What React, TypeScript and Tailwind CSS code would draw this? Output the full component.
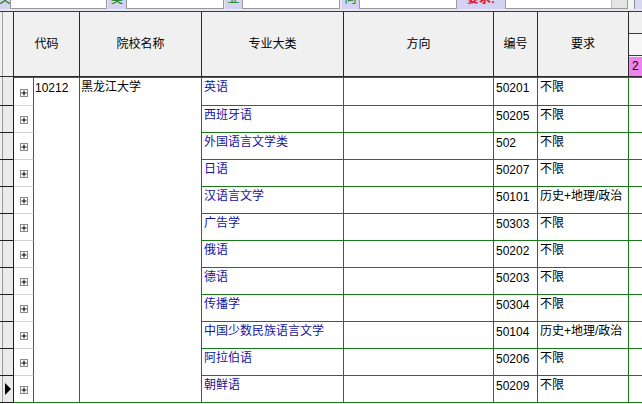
import React from "react";

const rows: [string, string, string][] = [
  ["英语", "50201", "不限"],
  ["西班牙语", "50205", "不限"],
  ["外国语言文学类", "502", "不限"],
  ["日语", "50207", "不限"],
  ["汉语言文学", "50101", "历史+地理/政治"],
  ["广告学", "50303", "不限"],
  ["俄语", "50202", "不限"],
  ["德语", "50203", "不限"],
  ["传播学", "50304", "不限"],
  ["中国少数民族语言文学", "50104", "历史+地理/政治"],
  ["阿拉伯语", "50206", "不限"],
  ["朝鲜语", "50209", "不限"],
];

function PlusBox() {
  return (
    <div className="w-[8px] h-[8px] border border-[#8a8a8a] bg-white flex items-center justify-center">
      <svg width="6" height="6" viewBox="0 0 6 6">
        <rect x="0.5" y="2.5" width="5" height="1" fill="#000" />
        <rect x="2.5" y="0.5" width="1" height="5" fill="#000" />
      </svg>
    </div>
  );
}

export default function App() {
  const font = { fontFamily: '"Liberation Sans", "Noto Sans CJK SC", sans-serif' };
  return (
    <div className="w-[642px] h-[404px] overflow-hidden bg-white text-[12px] text-black" style={font}>
      {/* top strip (clipped form) */}
      <div className="h-[11px] overflow-hidden flex items-end bg-[#e6e6f2]">
        <div className="flex items-end h-[24px] mb-[2px]">
          <div className="w-[12px] h-[20px] bg-[#d4d2f2] text-[#108010] leading-[20px] overflow-hidden -ml-[2px] pl-[1px]">文</div>
          <div className="w-[97px] h-[20px] bg-white border border-[#9a9a9a]" />
          <div className="w-[18px] h-[20px] bg-[#d4d2f2] text-[#108010] leading-[20px] text-center ml-[1px]">类</div>
          <div className="w-[98px] h-[20px] bg-white border border-[#9a9a9a]" />
          <div className="w-[17px] h-[20px] bg-[#d4d2f2] text-[#108010] leading-[20px] text-center ml-[1px]">业</div>
          <div className="w-[98px] h-[20px] bg-white border border-[#9a9a9a]" />
          <div className="w-[17px] h-[20px] bg-[#d4d2f2] text-[#108010] leading-[20px] text-center ml-[2px]">向</div>
          <div className="w-[98px] h-[20px] bg-white border border-[#9a9a9a]" />
          <div className="w-[48px] h-[20px] bg-[#d4d2f2] text-[#e01030] font-bold leading-[20px] text-center">要求:</div>
          <div className="w-[123px] h-[20px] bg-white border border-[#9a9a9a] flex justify-end">
            <div className="w-[16px] h-full bg-[#e4e4e4] border-l border-[#c0c0c0]" />
          </div>
          <div className="w-[6px] h-[20px] bg-[#f4f4f4]" />
          <div className="w-[1px] h-[20px] bg-[#8a8a9a]" />
          <div className="w-[7px] h-[20px] bg-[#d8d8f0]" />
        </div>
      </div>

      {/* table */}
      <div
        className="grid border-t border-[#3a3a3a] grid-cols-[14px_20px_46px_122px_142px_150px_44px_91px_13px] grid-rows-[65px_29px_repeat(11,27px)]"
      >
        {/* header */}
        <div className="bg-[#f0f0f0] border-b border-r border-[#2a2a2a] pl-[2px]">
          <div className="h-full border-l border-[#a0a0a0]" />
        </div>
        <div className="col-span-2 bg-[#f0f0f0] border-b border-r border-[#2a2a2a] flex items-center justify-center">代码</div>
        <div className="bg-[#f0f0f0] border-b border-r border-[#2a2a2a] flex items-center justify-center">院校名称</div>
        <div className="bg-[#f0f0f0] border-b border-r border-[#2a2a2a] flex items-center justify-center">专业大类</div>
        <div className="bg-[#f0f0f0] border-b border-r border-[#2a2a2a] flex items-center justify-center">方向</div>
        <div className="bg-[#f0f0f0] border-b border-r border-[#2a2a2a] flex items-center justify-center">编号</div>
        <div className="bg-[#f0f0f0] border-b border-r border-[#2a2a2a] flex items-center justify-center">要求</div>
        <div className="bg-[#f0f0f0] border-b border-[#2a2a2a] flex flex-col">
          <div className="h-[22px] border-b border-[#3a3a3a] bg-[#f0f0f0]" />
          <div className="h-[22px] border-b border-[#3a3a3a] bg-[#f6f6f6]" />
          <div className="flex-1 bg-[#ee82ee] mt-[1px] pl-[3px] leading-[18px]">2</div>
        </div>

        {/* data rows */}
        {rows.map((r, i) => {
          const first = i === 0;
          const last = i === rows.length - 1;
          const top = first ? "border-t border-t-[#1a7a1a]" : "";
          return (
            <React.Fragment key={i}>
              <div className="bg-[#f0f0f0] border-b border-r border-[#1e1e1e] pl-[2px]">
                <div className="h-full border-l border-[#9a9a9a] bg-[#ebebeb] flex items-center">
                  {last && (
                    <svg width="8" height="12" viewBox="0 0 8 12" className="ml-[2px]">
                      <polygon points="0,0 6,6 0,12" fill="#000" />
                    </svg>
                  )}
                </div>
              </div>
              <div
                className={`bg-white border-r border-r-[#1a7a1a] ${last ? "border-b border-b-[#1a7a1a]" : "border-b border-b-[#d0d0d0]"} ${top} pl-[6px] ${first ? "pt-[11px]" : "pt-[10px]"}`}
              >
                <PlusBox />
              </div>
              {first && (
                <>
                  <div className="row-span-12 border-r border-b border-t border-[#1a7a1a] pl-[1px] pt-[3px] leading-[14px]">10212</div>
                  <div className="row-span-12 border-r border-b border-t border-[#1a7a1a] pl-[1px] pt-[2px] leading-[14px]">黑龙江大学</div>
                </>
              )}
              <div className={`border-r border-b border-[#1a7a1a] ${top} pl-[2px] pt-[2px] leading-[14px] text-[#1414a0] whitespace-nowrap`}>{r[0]}</div>
              <div className={`border-r border-b border-[#1a7a1a] ${top}`} />
              <div className={`border-r border-b border-[#1a7a1a] ${top} pl-[2px] pt-[3px] leading-[14px]`}>{r[1]}</div>
              <div className={`border-r border-b border-[#1a7a1a] ${top} pl-[2px] pt-[2px] leading-[14px] whitespace-nowrap`}>{r[2]}</div>
              <div className={`border-b border-[#1a7a1a] ${top}`} />
            </React.Fragment>
          );
        })}
      </div>
    </div>
  );
}
